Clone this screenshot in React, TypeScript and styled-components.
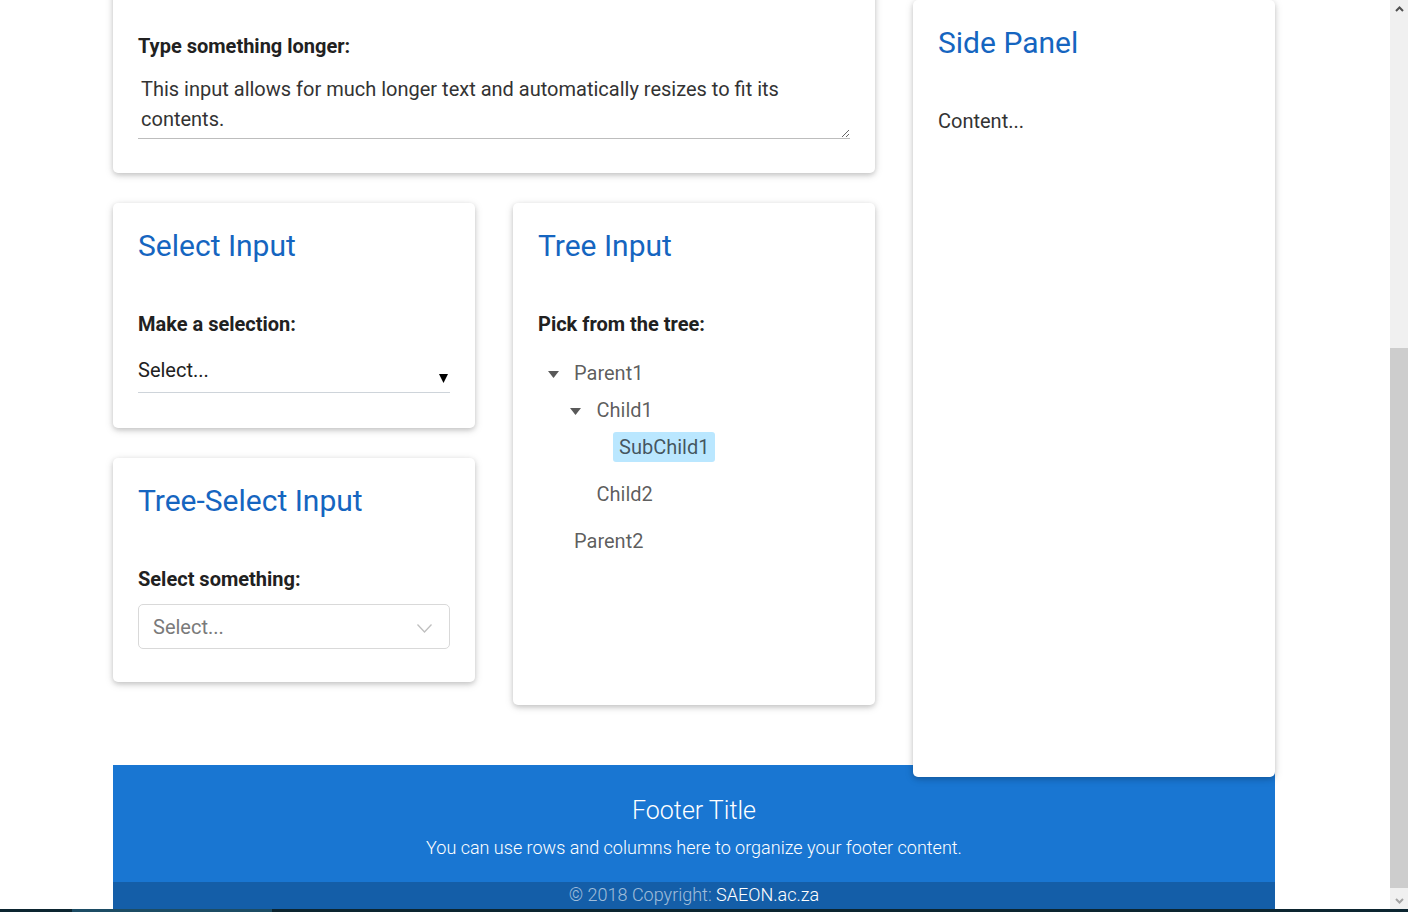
import React from "react";
import styled, { createGlobalStyle } from "styled-components";

const GlobalStyle = createGlobalStyle`
  html, body {
    margin: 0;
    padding: 0;
    height: 912px;
    overflow: hidden;
    background: #ffffff;
  }
  * { box-sizing: border-box; }
  body {
    font-family: Roboto, "Noto Sans", "Liberation Sans", sans-serif;
    color: #212529;
  }
`;

const Screen = styled.div`
  display: grid;
  grid-template-rows: 909px 3px;
  width: 1408px;
  height: 912px;
  overflow: hidden;
`;

const Viewport = styled.div`
  display: flex;
  min-height: 0;
  overflow: hidden;
`;

const Page = styled.div`
  flex: 1;
  display: flex;
  flex-direction: column;
  overflow: hidden;
`;

const Content = styled.div`
  display: grid;
  grid-template-columns: 762px 362px;
  column-gap: 38px;
  align-items: start;
  width: 1162px;
  margin-left: 113px;
`;

const LeftColumn = styled.div`
  display: flex;
  flex-direction: column;
  gap: 30px;
  padding-bottom: 60px;
`;

const CardRow = styled.div`
  display: grid;
  grid-template-columns: 362px 362px;
  column-gap: 38px;
  align-items: start;
`;

const Stack = styled.div`
  display: flex;
  flex-direction: column;
  gap: 30px;
`;

const Card = styled.section<{ $height?: number; $offsetTop?: number }>`
  background: #fff;
  border-radius: 5px;
  box-shadow: 0 2px 5px 0 rgba(0, 0, 0, 0.16), 0 2px 10px 0 rgba(0, 0, 0, 0.12);
  padding: 25px;
  ${(p) => (p.$height ? `height: ${p.$height}px;` : "")}
  ${(p) => (p.$offsetTop ? `margin-top: -${p.$offsetTop}px; padding-top: ${25 + p.$offsetTop + 6}px;` : "")}
`;

const SidePanel = styled(Card)`
  position: relative;
  z-index: 2;
  height: 777px;
  margin-bottom: -12px;
`;

const Title = styled.h3`
  margin: 0 0 45px;
  font-size: 30px;
  line-height: 36px;
  font-weight: 400;
  color: #1565c0;
`;

const Label = styled.label`
  display: block;
  font-size: 20px;
  line-height: 30px;
  font-weight: 700;
  color: #212121;
`;

const BodyText = styled.p`
  margin: 0;
  font-size: 20px;
  line-height: 30px;
  color: #333;
`;

const Field = styled.div<{ $before?: number; $after?: number }>`
  margin: ${(p) => p.$before ?? 10}px 0 ${(p) => p.$after ?? 10}px;
`;

const TextArea = styled.textarea`
  display: block;
  width: 100%;
  height: 68px;
  padding: 3px 3px 4px;
  border: none;
  border-bottom: 1px solid #bdbdbd;
  outline: none;
  font-family: Roboto, "Noto Sans", sans-serif;
  font-size: 20px;
  line-height: 30px;
  color: #333;
  background: transparent;
  resize: vertical;
`;

const NativeSelect = styled.div`
  display: flex;
  align-items: flex-end;
  justify-content: space-between;
  padding: 6px 2px 8px 0;
  border-bottom: 1px solid #ced4da;
  font-size: 20px;
  line-height: 28px;
  color: #212121;
`;

const Arrow = styled.svg`
  margin-bottom: 1px;
`;

const BoxSelect = styled.div`
  display: flex;
  align-items: center;
  justify-content: space-between;
  height: 45px;
  padding: 0 17px 0 14px;
  border: 1px solid #d9d9d9;
  border-radius: 5px;
  font-size: 20px;
  color: #7a7a7a;
`;

const Chevron = styled.svg`
  margin-top: 4px;
`;

const TreeList = styled.ul<{ $nested?: boolean }>`
  list-style: none;
  margin: 0;
  padding: ${(p) => (p.$nested ? "0 0 0 22.5px" : "2px 0 0")};
`;

const TreeItem = styled.li`
  padding: 7px 0 5px;
`;

const TreeRow = styled.div`
  display: flex;
  align-items: center;
  height: 30px;
`;

const Switcher = styled.span`
  display: flex;
  align-items: center;
  justify-content: center;
  width: 30px;
  height: 30px;
  padding-top: 3px;
`;

const NodeTitle = styled.span<{ $selected?: boolean }>`
  padding: 0 6px;
  height: 30px;
  line-height: 30px;
  font-size: 20px;
  color: rgba(0, 0, 0, 0.65);
  border-radius: 3px;
  background: ${(p) => (p.$selected ? "#bae7ff" : "transparent")};
`;

const Footer = styled.footer`
  width: 1162px;
  margin-left: 113px;
  background: #1976d2;
  color: #fff;
  text-align: center;
`;

const FooterMain = styled.div`
  padding: 31px 0 22px;
`;

const FooterTitle = styled.h5`
  margin: 0 0 9px;
  font-size: 25px;
  line-height: 30px;
  font-weight: 300;
`;

const FooterText = styled.p`
  margin: 0;
  font-size: 18px;
  line-height: 25px;
  font-weight: 300;
`;

const Copyright = styled.div`
  background: rgba(0, 0, 0, 0.2);
  padding: 2px 0 10px;
  font-size: 18px;
  line-height: 22px;
  font-weight: 300;
  color: rgba(255, 255, 255, 0.6);
`;

const CopyrightLink = styled.a`
  color: #fff;
  text-decoration: none;
`;

const Scrollbar = styled.div`
  width: 18px;
  display: flex;
  flex-direction: column;
  background: #f0f0f0;
`;

const ScrollButton = styled.div`
  height: 17px;
  display: flex;
  align-items: center;
  justify-content: center;
`;

const ScrollTrack = styled.div`
  flex: 1;
  display: flex;
  flex-direction: column;
  padding: 331px 0 4px;
`;

const ScrollThumb = styled.div`
  flex: 1;
  background: #cdcdcd;
`;

const Taskbar = styled.div`
  display: grid;
  grid-template-columns: 72px 200px 1fr;
  background: #0c2530;
`;

const TaskbarActive = styled.div`
  background: #1c4c64;
`;

type Node = { title: string; selected?: boolean; open?: boolean; children?: Node[] };

const treeData: Node[] = [
  {
    title: "Parent1",
    open: true,
    children: [
      { title: "Child1", open: true, children: [{ title: "SubChild1", selected: true }] },
      { title: "Child2" },
    ],
  },
  { title: "Parent2" },
];

const Caret = () => (
  <svg width="11" height="7" viewBox="0 0 11 7">
    <polygon points="0,0 11,0 5.5,7" fill="#595959" />
  </svg>
);

const Tree = ({ nodes, nested }: { nodes: Node[]; nested?: boolean }) => (
  <TreeList $nested={nested}>
    {nodes.map((n) => (
      <TreeItem key={n.title}>
        <TreeRow>
          <Switcher>{n.children ? <Caret /> : null}</Switcher>
          <NodeTitle $selected={n.selected}>{n.title}</NodeTitle>
        </TreeRow>
        {n.children && n.open ? <Tree nodes={n.children} nested /> : null}
      </TreeItem>
    ))}
  </TreeList>
);

export default function App() {
  return (
    <>
      <GlobalStyle />
      <Screen>
        <Viewport>
          <Page>
            <Content>
              <LeftColumn>
                <Card $offsetTop={30}>
                  <Label>Type something longer:</Label>
                  <Field $after={9}>
                    <TextArea
                      defaultValue="This input allows for much longer text and automatically resizes to fit its contents."
                    />
                  </Field>
                </Card>
                <CardRow>
                  <Stack>
                    <Card>
                      <Title>Select Input</Title>
                      <Label>Make a selection:</Label>
                      <Field $before={11}>
                        <NativeSelect>
                          <span>Select...</span>
                          <Arrow width="9" height="9" viewBox="0 0 9 9">
                            <polygon points="0,0 9,0 4.5,9" fill="#000" />
                          </Arrow>
                        </NativeSelect>
                      </Field>
                    </Card>
                    <Card>
                      <Title>Tree-Select Input</Title>
                      <Label>Select something:</Label>
                      <Field $after={8}>
                        <BoxSelect>
                          <span>Select...</span>
                          <Chevron width="15" height="9" viewBox="0 0 15 9">
                            <polyline points="0.5,0.5 7.5,8 14.5,0.5" fill="none" stroke="#bfbfbf" strokeWidth="1.3" />
                          </Chevron>
                        </BoxSelect>
                      </Field>
                    </Card>
                  </Stack>
                  <Card $height={502}>
                    <Title>Tree Input</Title>
                    <Label>Pick from the tree:</Label>
                    <Field>
                      <Tree nodes={treeData} />
                    </Field>
                  </Card>
                </CardRow>
              </LeftColumn>
              <SidePanel>
                <Title>Side Panel</Title>
                <BodyText>Content...</BodyText>
              </SidePanel>
            </Content>
            <Footer>
              <FooterMain>
                <FooterTitle>Footer Title</FooterTitle>
                <FooterText>You can use rows and columns here to organize your footer content.</FooterText>
              </FooterMain>
              <Copyright>
                © 2018 Copyright: <CopyrightLink href="#">SAEON.ac.za</CopyrightLink>
              </Copyright>
            </Footer>
          </Page>
          <Scrollbar>
            <ScrollButton>
              <svg width="9" height="6" viewBox="0 0 9 6">
                <polyline points="1,5 4.5,1.5 8,5" fill="none" stroke="#505050" strokeWidth="2" />
              </svg>
            </ScrollButton>
            <ScrollTrack>
              <ScrollThumb />
            </ScrollTrack>
            <ScrollButton>
              <svg width="9" height="6" viewBox="0 0 9 6">
                <polyline points="1,1 4.5,4.5 8,1" fill="none" stroke="#a3a3a3" strokeWidth="2" />
              </svg>
            </ScrollButton>
          </Scrollbar>
        </Viewport>
        <Taskbar>
          <div />
          <TaskbarActive />
          <div />
        </Taskbar>
      </Screen>
    </>
  );
}
